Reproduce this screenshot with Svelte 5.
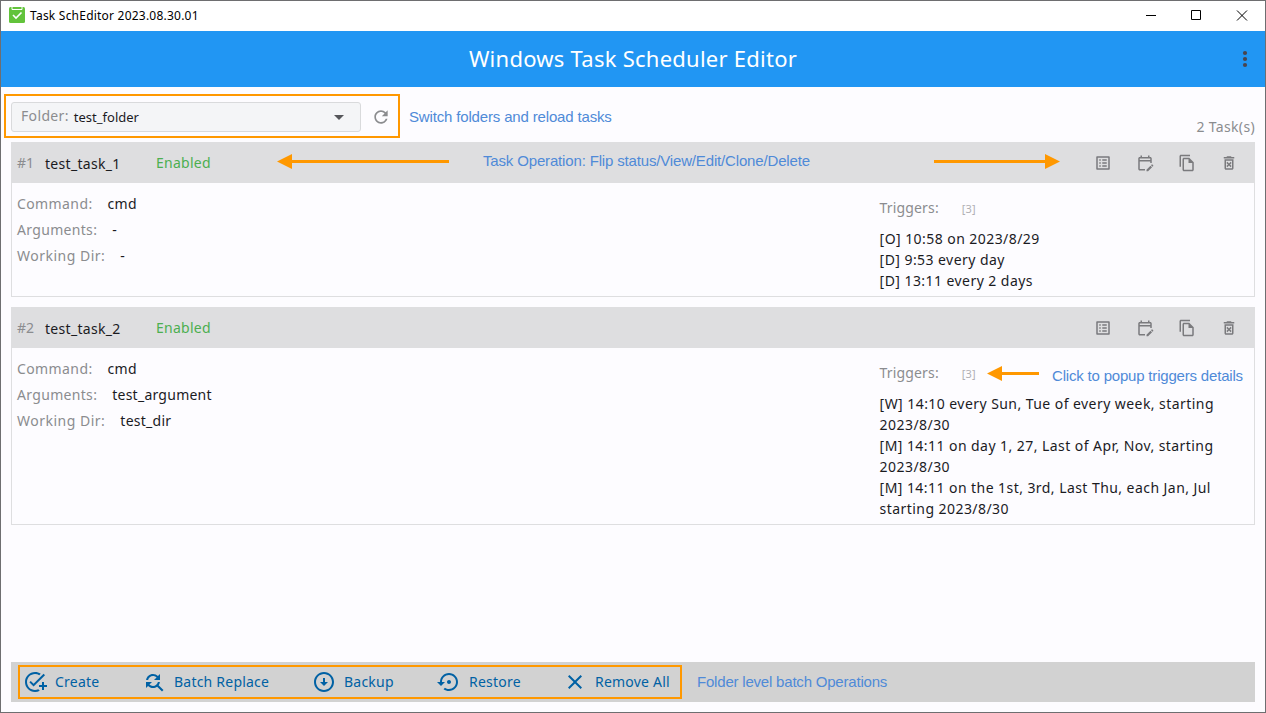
<script>
  const icons = {
    list: 'M11 7h6v2h-6zm0 4h6v2h-6zm0 4h6v2h-6zM7 7h2v2H7zm0 4h2v2H7zm0 4h2v2H7zM20.1 3H3.9c-.5 0-.9.4-.9.9v16.2c0 .4.4.9.9.9h16.2c.4 0 .9-.5.9-.9V3.9c0-.5-.5-.9-.9-.9zM19 19H5V5h14v14z',
    edit: 'M12 22H5c-1.1 0-2-.9-2-2L3.01 6c0-1.1.88-2 1.99-2h1V2h2v2h8V2h2v2h1c1.1 0 2 .9 2 2v6h-2v-2H5v10h7v2zM22.13 16.99l.71-.71c.39-.39.39-1.02 0-1.41l-.71-.71c-.39-.39-1.02-.39-1.41 0l-.71.71 2.12 2.12zM21.42 17.7l-5.3 5.3H14v-2.12l5.3-5.3 2.12 2.12zM5 8h14V6H5z',
    copy: 'M16 1H4c-1.1 0-2 .9-2 2v14h2V3h12V1zm-1 4H8c-1.1 0-1.99.9-1.99 2L6 21c0 1.1.89 2 1.99 2H19c1.1 0 2-.9 2-2V11l-6-6zM8 21V7h6v5h5v9H8z',
    remove: 'M14.12 10.47L12 12.59l-2.13-2.12-1.41 1.41L10.59 14l-2.12 2.12 1.41 1.41L12 15.41l2.12 2.12 1.41-1.41L13.41 14l2.12-2.12zM15.5 4l-1-1h-5l-1 1H5v2h14V4zM6 19c0 1.1.9 2 2 2h8c1.1 0 2-.9 2-2V7H6v12zM8 9h8v10H8V9z',
    refresh: 'M17.65 6.35C16.2 4.9 14.21 4 12 4c-4.42 0-7.99 3.58-7.99 8s3.57 8 7.99 8c3.73 0 6.84-2.55 7.73-6h-2.08c-.82 2.33-3.04 4-5.65 4-3.31 0-6-2.69-6-6s2.69-6 6-6c1.66 0 3.14.69 4.22 1.78L13 11h7V4l-2.35 2.35z',
    create: 'M22 5.18L10.59 16.6l-4.24-4.24 1.41-1.41 2.83 2.83 10-10L22 5.18zM12 20c-4.42 0-8-3.58-8-8s3.58-8 8-8c1.57 0 3.04.46 4.28 1.25l1.45-1.45C16.1 2.67 14.13 2 12 2 6.48 2 2 6.48 2 12s4.48 10 10 10c1.73 0 3.36-.44 4.78-1.22l-1.5-1.5c-1 .46-2.11.72-3.28.72zm7-5h-3v2h3v3h2v-3h3v-2h-3v-3h-2v3z',
    replace: 'M11 6c1.38 0 2.63.56 3.54 1.46L12 10h6V4l-2.05 2.05C14.68 4.78 12.93 4 11 4c-3.53 0-6.43 2.61-6.92 6H6.1c.46-2.28 2.48-4 4.9-4zm5.64 9.14c.66-.9 1.12-1.97 1.28-3.14H15.9c-.46 2.28-2.48 4-4.9 4-1.38 0-2.63-.56-3.54-1.46L10 12H4v6l2.05-2.05C7.32 17.22 9.07 18 11 18c1.55 0 2.98-.51 4.14-1.36L20 21.49 21.49 20l-4.85-4.86z',
    backup: 'M12 4c4.41 0 8 3.59 8 8s-3.59 8-8 8-8-3.59-8-8 3.59-8 8-8m0-2C6.48 2 2 6.48 2 12s4.48 10 10 10 10-4.48 10-10S17.52 2 12 2zm1 10V8h-2v4H8l4 4 4-4h-3z',
    restore: 'M14 12c0-1.1-.9-2-2-2s-2 .9-2 2 .9 2 2 2 2-.9 2-2zm-2-9c-4.97 0-9 4.03-9 9H0l4 4 4-4H5c0-3.87 3.13-7 7-7s7 3.13 7 7-3.13 7-7 7c-1.51 0-2.91-.49-4.06-1.3l-1.42 1.44C8.04 20.3 9.94 21 12 21c4.97 0 9-4.03 9-9s-4.03-9-9-9z',
    clear: 'M19 6.41L17.59 5 12 10.59 6.41 5 5 6.41 10.59 12 5 17.59 6.41 19 12 13.41 17.59 19 19 17.59 13.41 12z'
  };

  const tasks = [
    {
      id: 1, name: 'test_task_1', command: 'cmd', args: '-', dir: '-',
      triggers: ['[O] 10:58 on 2023/8/29', '[D] 9:53 every day', '[D] 13:11 every 2 days']
    },
    {
      id: 2, name: 'test_task_2', command: 'cmd', args: 'test_argument', dir: 'test_dir',
      triggers: [
        '[W] 14:10 every Sun, Tue of every week, starting\n2023/8/30',
        '[M] 14:11 on day 1, 27, Last of Apr, Nov, starting\n2023/8/30',
        '[M] 14:11 on the 1st, 3rd, Last Thu, each Jan, Jul\nstarting 2023/8/30'
      ]
    }
  ];

  const actions = [
    { key: 'create', label: 'Create', width: 119 },
    { key: 'replace', label: 'Batch Replace', width: 170 },
    { key: 'backup', label: 'Backup', width: 125 },
    { key: 'restore', label: 'Restore', width: 126 },
    { key: 'clear', label: 'Remove All', width: 110 }
  ];
</script>

{#snippet icon(name, size)}
  <svg width={size} height={size} viewBox="0 0 24 24" fill="currentColor"><path d={icons[name]} /></svg>
{/snippet}

<div class="window">
  <header class="titlebar">
    <svg class="logo" width="16" height="16" viewBox="0 0 16 16">
      <rect width="16" height="16" rx="1.5" fill="#62c33b" />
      <path d="M3 0v2.5h10V0" fill="none" stroke="#fff" stroke-width="1" />
      <path d="M4 8l3 3 5.5-5.5" fill="none" stroke="#fff" stroke-width="1.6" />
    </svg>
    <span class="app-name">Task SchEditor 2023.08.30.01</span>
    <svg class="controls" width="120" height="30" viewBox="0 0 120 30" fill="none" stroke="#000">
      <path d="M1 14.5h10M46.5 9.5h9v9h-9zM92 9.5l10 10M102 9.5l-10 10" />
    </svg>
  </header>

  <div class="appbar">
    <h1>Windows Task Scheduler Editor</h1>
    <svg class="more" width="6" height="18" viewBox="0 0 6 18" fill="#49454f">
      <circle cx="3" cy="3" r="2.1" /><circle cx="3" cy="9" r="2.1" /><circle cx="3" cy="15" r="2.1" />
    </svg>
  </div>

  <main>
    <div class="toolbar">
      <div class="select">
        <span class="select-label">Folder:</span>
        <span class="select-value">test_folder</span>
        <svg class="caret" width="10" height="5" viewBox="0 0 10 5"><path d="M0 0h10L5 5z" fill="#55565a" /></svg>
      </div>
      <span class="reload">{@render icon('refresh', 20)}</span>
      <span class="count">2 Task(s)</span>
    </div>

    {#each tasks as task}
      <section class="card">
        <div class="card-head">
          <span class="num">#{task.id}</span>
          <span class="name">{task.name}</span>
          <span class="status">Enabled</span>
          <div class="ops">
            {#each ['list', 'edit', 'copy', 'remove'] as op}
              <span>{@render icon(op, 18)}</span>
            {/each}
          </div>
        </div>
        <div class="card-body">
          <dl>
            <div><dt>Command:</dt><dd>{task.command}</dd></div>
            <div><dt class="tight">Arguments:</dt><dd>{task.args}</dd></div>
            <div><dt class="loose">Working Dir:</dt><dd>{task.dir}</dd></div>
          </dl>
          <div class="triggers">
            <div class="trig-head"><span>Triggers:</span><small>[3]</small></div>
            {#each task.triggers as t}
              <p>{t}</p>
            {/each}
          </div>
        </div>
      </section>
    {/each}

    <footer>
      {#each actions as a}
        <div class="action" style="width: {a.width}px">
          {@render icon(a.key, 24)}<span>{a.label}</span>
        </div>
      {/each}
    </footer>
  </main>

  <div class="frame frame-top"></div>
  <div class="frame frame-bottom"></div>
  <span class="note n1">Switch folders and reload tasks</span>
  <span class="note n2">Task Operation: Flip status/View/Edit/Clone/Delete</span>
  <span class="note n3">Click to popup triggers details</span>
  <span class="note n4">Folder level batch Operations</span>
  <svg class="arrows" width="1266" height="713" viewBox="0 0 1266 713" fill="#ff9800">
    <path d="M277 161.5l15-7.5v6h157v3H292v6z" />
    <path d="M1060 161.5l-15-7.5v6H934v3h111v6z" />
    <path d="M987 373.5l15-7.5v6h37v3h-37v6z" />
  </svg>
</div>

<style>
  :global(body) { background: #fdfcff; }
  .window {
    position: relative;
    box-sizing: border-box;
    width: 1266px;
    height: 713px;
    border: 1px solid #6e6e70;
    background: #fdfcff;
    color: #1b1b1f;
    font: 14px/20px "Noto Sans", "Open Sans", sans-serif;
    display: flex;
    flex-direction: column;
    overflow: hidden;
  }
  svg { display: block; flex: none; }
  .titlebar {
    height: 30px;
    background: #fff;
    display: flex;
    align-items: center;
    padding-left: 8px;
    flex: none;
  }
  .logo { margin-top: -2px; }
  .app-name { margin: -1px 0 0 5px; font-size: 12px; letter-spacing: 0.22px; color: #000; }
  .controls { margin-left: auto; }
  .appbar {
    height: 56px;
    flex: none;
    background: #2196f3;
    display: grid;
    grid-template-columns: 40px 1fr 40px;
    align-items: center;
  }
  h1 {
    grid-column: 2;
    margin: -2px 0 0;
    text-align: center;
    color: #fff;
    font-size: 22px;
    line-height: 30px;
    font-weight: 400;
    letter-spacing: 0.25px;
  }
  .more { justify-self: center; }
  main { flex: 1; display: flex; flex-direction: column; padding: 0 10px 10px; }
  .toolbar { height: 55px; display: flex; flex: none; }
  .select {
    box-sizing: border-box;
    width: 350px;
    height: 30px;
    margin-top: 15px;
    padding: 0 16px 0 9px;
    border: 1px solid #d9dadc;
    border-radius: 3px;
    background: #f4f5f7;
    display: flex;
    align-items: center;
  }
  .select-label { color: #8b8c8f; margin-top: -2px; letter-spacing: 0.35px; }
  .select-value { margin: 0 0 0 5px; font-size: 13px; }
  .caret { margin-left: auto; }
  .reload { margin: 20px 0 0 10px; color: #8b8c8f; }
  .count { margin: 30px 0 0 auto; color: #8b8c8f; letter-spacing: 0.35px; }
  .card { border: 1px solid #dedee0; border-top: 0; margin-bottom: 10px; flex: none; }
  .card-head {
    height: 41px;
    margin: 0 -1px;
    padding: 0 17px 0 6px;
    background: #dedee0;
    display: flex;
    align-items: center;
  }
  .num { width: 28px; color: #8b8c8f; }
  .name { width: 111px; margin-top: 2px; letter-spacing: 0.3px; }
  .status { color: #4caf50; letter-spacing: 0.25px; }
  .ops { margin-left: auto; display: flex; gap: 24px; color: #7a7a7d; }
  .card-body { display: flex; justify-content: space-between; }
  dl { margin: 8px 0 0 5px; }
  dl div { height: 26px; display: flex; align-items: center; }
  dt { color: #8b8c8f; letter-spacing: 0.4px; }
  .tight { letter-spacing: 0.32px; }
  .loose { letter-spacing: 0.5px; }
  dd { margin: 0 0 0 15px; letter-spacing: 0.25px; }
  .triggers { width: 374.4px; padding: 11px 0 5px; }
  .trig-head { height: 34px; display: flex; color: #8b8c8f; line-height: 27px; letter-spacing: 0.15px; }
  small { margin-left: 23px; font-size: 11px; line-height: 30px; color: #b0b0b4; }
  p { margin: 0; line-height: 21px; white-space: pre-line; letter-spacing: 0.44px; }
  footer {
    height: 40px;
    margin-top: auto;
    padding-left: 12px;
    background: #d2d2d2;
    color: #0061a4;
    display: flex;
    align-items: center;
    flex: none;
    letter-spacing: 0.22px;
  }
  .action { display: flex; align-items: center; gap: 8px; flex: none; white-space: nowrap; }
  .frame { position: absolute; box-sizing: border-box; border: 2px solid #ff9800; }
  .frame-top { left: 3px; top: 93px; width: 396px; height: 44px; }
  .frame-bottom { left: 17px; top: 664px; width: 664px; height: 34px; }
  .note {
    position: absolute;
    color: #4f8ad8;
    font: 15px/18px "Liberation Sans", Arial, sans-serif;
    letter-spacing: -0.16px;
    white-space: nowrap;
  }
  .n1 { left: 408px; top: 107px; }
  .n2 { left: 482px; top: 151px; }
  .n3 { left: 1051px; top: 366px; letter-spacing: -0.19px; }
  .n4 { left: 696px; top: 672px; letter-spacing: -0.2px; }
  .arrows { position: absolute; left: -1px; top: -1px; pointer-events: none; }
</style>
